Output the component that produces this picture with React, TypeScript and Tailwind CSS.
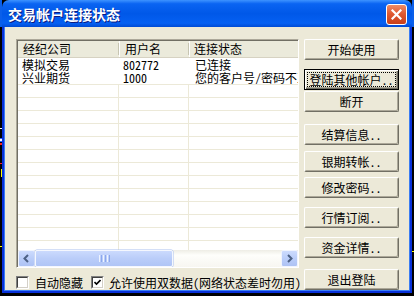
import React from "react";

const F = "font-['Noto_Sans_Mono_CJK_SC','Noto_Sans_CJK_SC',sans-serif]";

function Btn({ label, cls = "", focused = false }: { label: string; cls?: string; focused?: boolean }) {
  if (focused) {
    return (
      <div className={`h-[21px] w-[95px] shrink-0 border border-black bg-[#ECE9D8] shadow-[inset_1px_1px_0_#fff,inset_-1px_-1px_0_#716F64,inset_-2px_-2px_0_#ACA899] flex p-[2px] ${cls}`}>
        <div className="flex-1 border border-dotted border-black flex items-center justify-center text-[12px] leading-none text-black whitespace-nowrap">
          {label}
        </div>
      </div>
    );
  }
  return (
    <div
      className={`h-[21px] w-[95px] shrink-0 bg-[#ECE9D8] border border-t-white border-l-white border-b-[#716F64] border-r-[#716F64] shadow-[inset_-1px_-1px_0_#ACA899] rounded-[2px] flex items-center justify-center text-[12px] leading-none text-black whitespace-nowrap ${cls}`}
    >
      {label}
    </div>
  );
}

function Arrow({ dir }: { dir: "l" | "r" }) {
  return (
    <div className="w-[17px] h-[17px] shrink-0 rounded-[2px] border border-[#F0F4FE] bg-[linear-gradient(to_bottom,#CCDBFD,#BACDF9_50%,#AEC3F4)] flex items-center justify-center">
      <svg width="9" height="9" viewBox="0 0 9 9">
        {dir === "l" ? (
          <path d="M6 1 L2.5 4.5 L6 8" fill="none" stroke="#4D6185" strokeWidth="2" />
        ) : (
          <path d="M3 1 L6.5 4.5 L3 8" fill="none" stroke="#4D6185" strokeWidth="2" />
        )}
      </svg>
    </div>
  );
}

function CheckBox({ checked }: { checked?: boolean }) {
  return (
    <div className="w-[13px] h-[13px] shrink-0 border border-t-[#808080] border-l-[#808080] border-r-white border-b-white">
      <div className="w-full h-full bg-white border border-t-[#404040] border-l-[#404040] border-r-[#D4D0C8] border-b-[#D4D0C8] flex items-center justify-center">
        {checked && (
          <svg width="7" height="7" viewBox="0 0 7 7">
            <path d="M0.5 3 L2.5 5 L6.5 1" fill="none" stroke="#000" strokeWidth="1.6" />
          </svg>
        )}
      </div>
    </div>
  );
}

export default function App() {
  const emptyRows = Array.from({ length: 13 });
  return (
    <div className={`w-[414px] h-[296px] bg-black flex overflow-hidden ${F}`}>
      {/* desktop strip left */}
      <div className="w-[2px] shrink-0 flex flex-col">
        <div className="h-[27px] bg-[#0A5FEA]" />
        <div className="h-[101px]" />
        <div className="h-[1px] bg-white" />
        <div className="h-[9px]" />
        <div className="h-[1px] bg-[#3060FF]" />
        <div className="h-[2px] bg-white" />
        <div className="h-[1px] bg-[#3060FF]" />
        <div className="h-[1px]" />
        <div className="h-[2px] bg-[#FF2020]" />
        <div className="h-[18px]" />
        <div className="h-[1px] bg-[#FF2020]" />
        <div className="h-[5px]" />
        <div className="h-[8px] w-[1px] ml-[1px] bg-[#FFFF00]" />
        <div className="h-[69px]" />
        <div className="h-[1px] bg-[#FFFF00]" />
      </div>

      {/* window */}
      <div className="w-[410px] h-[293px] shrink-0 flex flex-col">
        {/* title bar */}
        <div className="h-[27px] shrink-0 rounded-t-[7px] bg-[linear-gradient(to_bottom,#3D93FF_0%,#0A64F2_14%,#0058E8_50%,#0560F2_86%,#004BD4_100%)] flex items-start justify-between pl-[6px] pr-[5px]">
          <span className="mt-[6px] text-[14px] leading-[16px] font-bold text-white [text-shadow:1px_1px_0_#0A1A80]">
            交易帐户连接状态
          </span>
          <div className="mt-[4px] w-[21px] h-[21px] rounded-[3px] border border-white bg-[linear-gradient(to_bottom,#EE8C66,#E05A32_45%,#C8401A)] flex items-center justify-center">
            <svg width="11" height="11" viewBox="0 0 11 11">
              <path d="M1.5 1.5 L9.5 9.5 M9.5 1.5 L1.5 9.5" stroke="#fff" strokeWidth="2.2" strokeLinecap="square" />
            </svg>
          </div>
        </div>

        {/* frame */}
        <div className="flex-1 flex bg-[#0831D9] px-[2px] pb-[2px]">
          <div className="flex-1 flex bg-[#3A7DF3] pl-[1px] pr-[1px] pb-[1px]">
            <div className="flex-1 flex bg-[#ECE9D8] pl-[11px] pt-[12px] pr-[10px]">
              {/* left column */}
              <div className="w-[283px] shrink-0 flex flex-col">
                <div className="h-[229px] shrink-0 flex border border-t-[#ACA899] border-l-[#ACA899] border-r-white border-b-white">
                  <div className="flex-1 min-w-0 flex flex-col border-t border-l border-t-[#716F64] border-l-[#716F64] bg-white overflow-hidden">
                    {/* header */}
                    <div className="h-[17px] shrink-0 flex bg-[#EBEADB] border-b border-b-[#D6D2C2] text-[12px] leading-none text-black">
                      <div className="w-[101px] shrink-0 flex items-center justify-between pl-[5px]">
                        <span>经纪公司</span>
                        <div className="w-[1px] h-[12px] bg-[#C7C5B2]" />
                      </div>
                      <div className="w-[70px] shrink-0 flex items-center justify-between pl-[5px] border-l border-l-white">
                        <span>用户名</span>
                        <div className="w-[1px] h-[12px] bg-[#C7C5B2]" />
                      </div>
                      <div className="flex-1 flex items-center pl-[4px] border-l border-l-white">
                        <span>连接状态</span>
                      </div>
                    </div>
                    {/* data rows */}
                    <div className="h-[13px] shrink-0 flex text-[12px] leading-[13px] text-black">
                      <div className="w-[101px] shrink-0 pl-[4px] whitespace-nowrap">模拟交易</div>
                      <div className="w-[70px] shrink-0 pl-[4px] whitespace-nowrap">802772</div>
                      <div className="flex-1 min-w-0 pl-[6px] whitespace-nowrap overflow-hidden">已连接</div>
                    </div>
                    <div className="h-[13px] shrink-0 flex text-[12px] leading-[13px] text-black">
                      <div className="w-[101px] shrink-0 pl-[4px] whitespace-nowrap">兴业期货</div>
                      <div className="w-[70px] shrink-0 pl-[4px] whitespace-nowrap">1000</div>
                      <div className="flex-1 min-w-0 pl-[6px] whitespace-nowrap overflow-hidden">您的客户号/密码不正确</div>
                    </div>
                    {/* empty rows */}
                    <div className="flex-1 min-h-0 overflow-hidden flex flex-col">
                      {emptyRows.map((_, i) => (
                        <div key={i} className="h-[13px] shrink-0 flex border-t border-t-[#ECE9D8]">
                          <div className="w-[101px] shrink-0 border-r border-r-[#ECE9D8]" />
                          <div className="w-[70px] shrink-0 border-r border-r-[#ECE9D8]" />
                          <div className="flex-1" />
                        </div>
                      ))}
                    </div>
                    {/* horizontal scrollbar */}
                    <div className="h-[17px] shrink-0 flex bg-[linear-gradient(to_bottom,#EEEDE5,#FEFEFB_30%,#F7F6F1)]">
                      <Arrow dir="l" />
                      <div className="w-[138px] shrink-0 rounded-[2px] border border-[#F4F7FE] bg-[linear-gradient(to_bottom,#CBDAFD,#BACDF9_50%,#B0C5F6)] shadow-[0_0_0_0.5px_#A9BFF0] flex items-center justify-center gap-[1px]">
                        <div className="w-[1px] h-[7px] bg-[#EEF4FE]" />
                        <div className="w-[1px] h-[7px] bg-[#8CA8EC]" />
                        <div className="w-[1px] h-[7px] bg-[#EEF4FE]" />
                        <div className="w-[1px] h-[7px] bg-[#8CA8EC]" />
                        <div className="w-[1px] h-[7px] bg-[#EEF4FE]" />
                        <div className="w-[1px] h-[7px] bg-[#8CA8EC]" />
                      </div>
                      <div className="flex-1" />
                      <Arrow dir="r" />
                    </div>
                  </div>
                </div>
                {/* checkbox row */}
                <div className="mt-[8px] h-[13px] flex items-center text-[12px] leading-none text-black whitespace-nowrap">
                  <CheckBox />
                  <span className="ml-[6px]">自动隐藏</span>
                  <div className="ml-[8px]">
                    <CheckBox checked />
                  </div>
                  <span className="ml-[5px]">允许使用双数据(网络状态差时勿用)</span>
                </div>
              </div>

              {/* right column */}
              <div className="ml-[5px] w-[95px] shrink-0 flex flex-col">
                <Btn label="开始使用" />
                <Btn label="登陆其他帐户.." focused cls="mt-[9px]" />
                <Btn label="断开" cls="mt-[1px]" />
                <Btn label="结算信息.." cls="mt-[12px]" />
                <Btn label="银期转帐.." cls="mt-[6px]" />
                <Btn label="修改密码.." cls="mt-[5px]" />
                <Btn label="行情订阅.." cls="mt-[9px]" />
                <Btn label="资金详情.." cls="mt-[9px]" />
                <Btn label="退出登陆" cls="mt-[11px]" />
              </div>
            </div>
          </div>
        </div>
      </div>

      {/* desktop strip right */}
      <div className="w-[2px] shrink-0 flex flex-col">
        <div className="h-[27px] bg-[#0A5FEA]" />
        <div className="h-[224px]" />
        <div className="h-[1px] bg-[#FFFF00]" />
      </div>
    </div>
  );
}
